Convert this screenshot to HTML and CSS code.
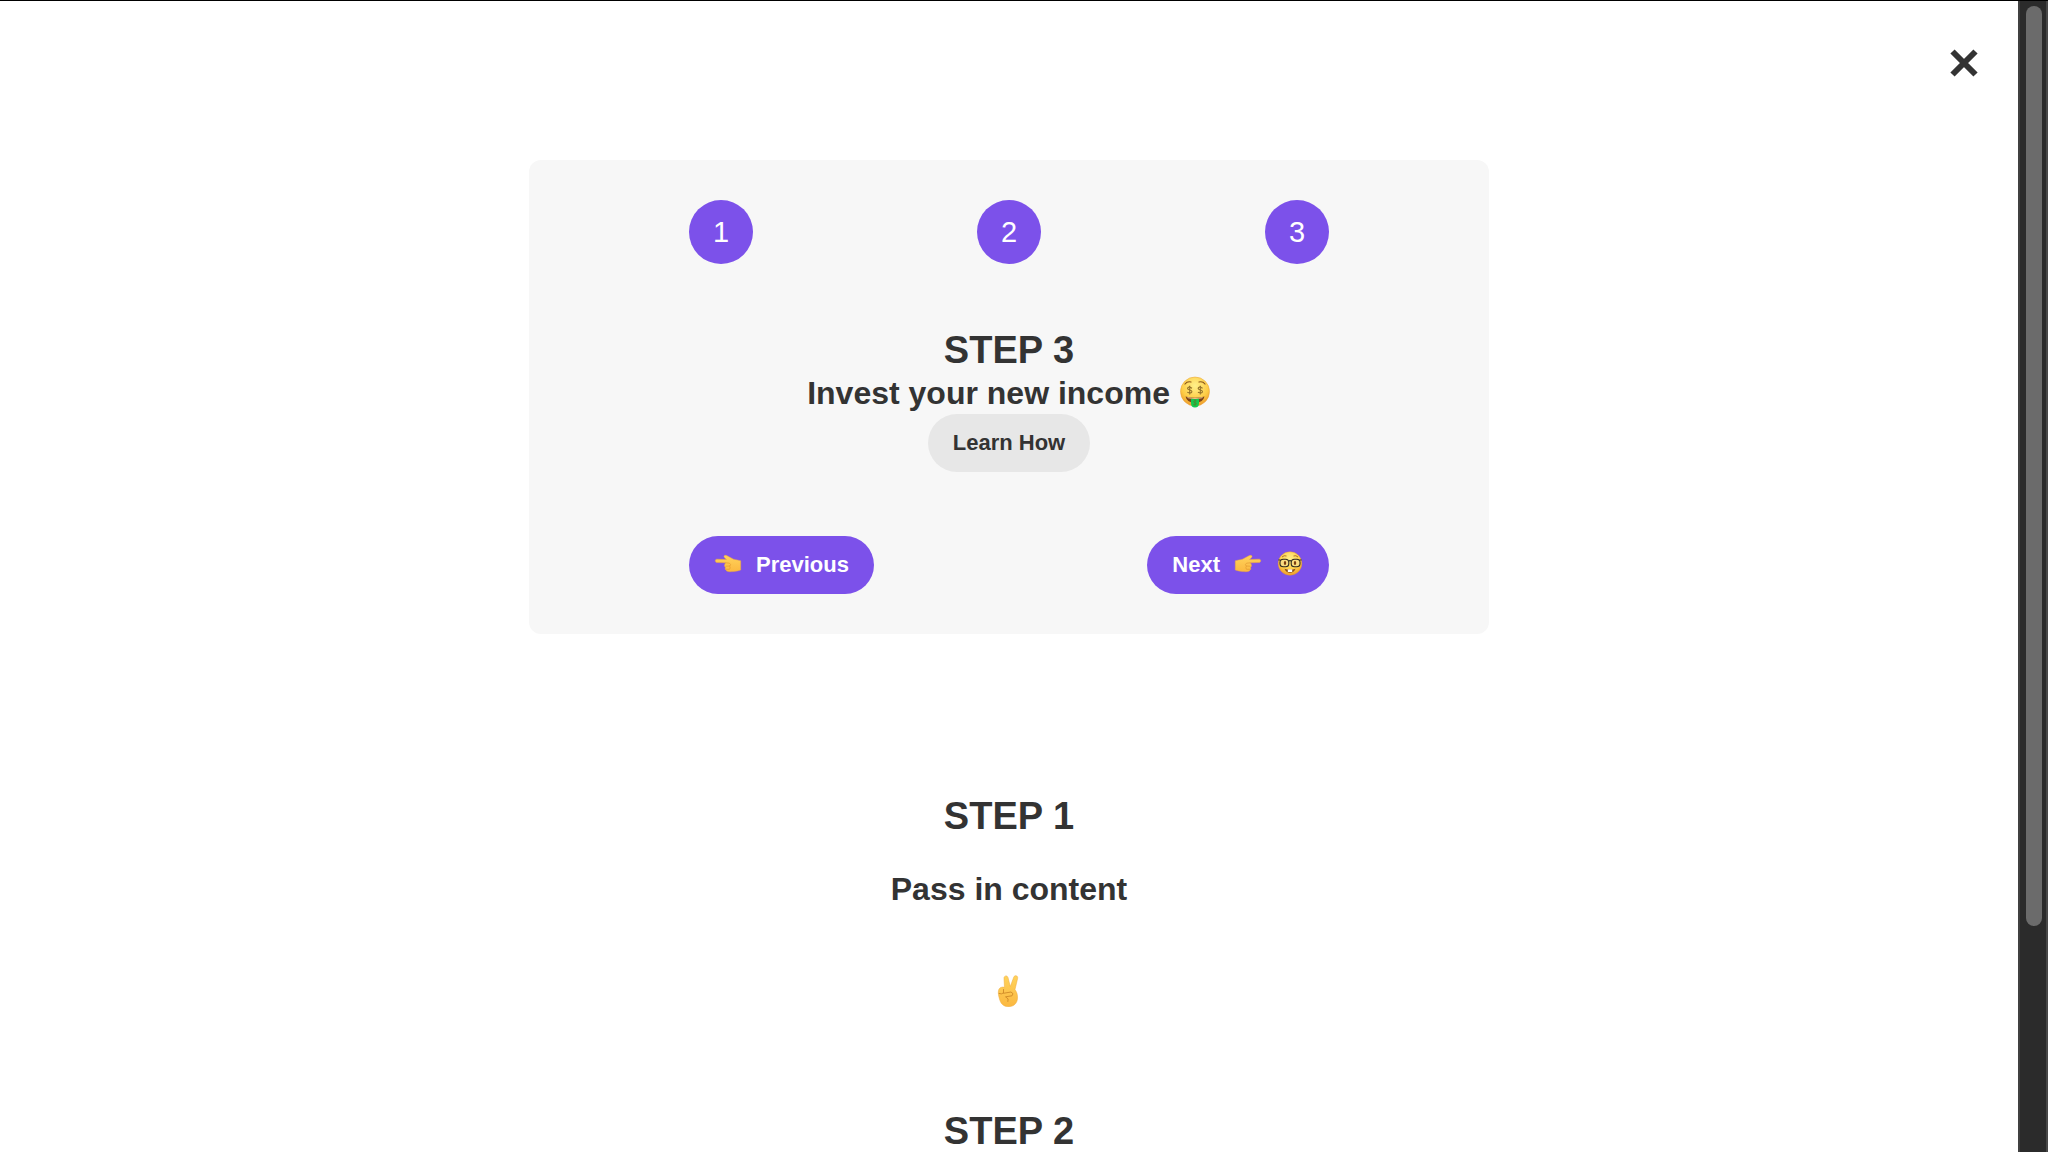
FILE: index.html
```html
<!DOCTYPE html>
<html lang="en">
<head>
<meta charset="utf-8">
<meta name="viewport" content="width=device-width, initial-scale=1">
<title>Steps</title>
<link rel="stylesheet" href="styles.css">
</head>
<body>
<svg class="defs" aria-hidden="true">
  <defs>
    <radialGradient id="face" cx="50%" cy="30%" r="72%">
      <stop offset="0" stop-color="#fff08a"/><stop offset=".65" stop-color="#fdcc45"/><stop offset="1" stop-color="#ec9528"/>
    </radialGradient>
    <linearGradient id="skin" x1="0" y1="0" x2="0" y2="1">
      <stop offset="0" stop-color="#ffd35c"/><stop offset="1" stop-color="#fbb840"/>
    </linearGradient>
    <symbol id="hand" viewBox="0 0 28 28">
      <path fill="url(#skin)" stroke="#efa93c" stroke-width=".5" d="M1.400 10.200C1 9 2 8 3.300 8.200L12.500 8.500C11.500 7.400 9.700 6.300 10 5.200C10.400 3.800 12.500 4.400 14 5.300L19.500 8.200C22 8.800 25 9.300 26.700 9.800V19C24.500 19.600 22 20.500 19.500 20.500C16.500 20.700 12.800 21.200 11.800 19C10.800 18 11.300 17 11.500 16.400C10 15.300 10.500 13.800 11 13L11.500 11.800L3 11.500C2.200 11.500 1.600 11 1.400 10.200Z"/>
      <path fill="none" stroke="#e39a30" stroke-width=".7" stroke-linecap="round" d="M11.600 11.800L15.500 12.200Q17.500 13.400 15.800 15L11.800 15.200M12 18.300H15.500Q16.800 17 15.800 15.300"/>
    </symbol>
  </defs>
</svg>
<div class="page">
  <main class="content">
    <button class="close" type="button" aria-label="Close">
      <svg viewBox="0 0 28 28" width="28" height="28" aria-hidden="true"><path d="M2.500 2.500L25.500 25.500M25.500 2.500L2.500 25.500" stroke="#333" stroke-width="6"/></svg>
    </button>

    <section class="card">
      <div class="numbers">
        <div class="number">1</div>
        <div class="number">2</div>
        <div class="number">3</div>
      </div>
      <div class="message">
        <h2 class="title">STEP 3</h2>
        <p class="text">Invest your new income
          <svg class="emoji" viewBox="0 0 32 32" role="img" aria-label="Money face">
            <circle cx="16" cy="15.500" r="14.500" fill="url(#face)" stroke="#e9a035" stroke-width=".5"/>
            <path d="M6 8Q8.300 5 12 6M20 6Q23.700 5 26 8" fill="none" stroke="#8a5418" stroke-width="1.200" stroke-linecap="round"/>
            <g fill="none" stroke="#94722a" stroke-width="1.100"><path d="M13 12.200Q9.200 10 8.600 12.200Q8.400 13.600 10.700 14Q13.200 14.600 12.800 16Q12 17.800 8.300 16.300M10.700 9.800V18.400"/><path d="M23.600 12.200Q19.800 10 19.200 12.200Q19 13.600 21.300 14Q23.800 14.600 23.400 16Q22.600 17.800 18.900 16.300M21.300 9.800V18.400"/></g>
            <path d="M6.500 20.500Q16 23 25.500 20.500Q24 27 16 27Q8 27 6.500 20.500Z" fill="#7b421a"/>
            <path d="M8 20.900Q16 23 24 20.900L23 22.300Q16 23.800 9 22.300Z" fill="#e9c58b"/>
            <path d="M12 22.700Q16 23.600 20 22.700V27Q20 31.500 16 31.500Q12 31.500 12 27Z" fill="#14c84e"/>
            <path d="M17.600 25Q14.800 24 14.600 25.600Q14.600 26.500 16 26.800Q17.700 27.200 17.300 28.200Q16.500 29.400 14.300 28.500M16 23.800V29.700" fill="none" stroke="#4d8a2c" stroke-width=".9"/>
          </svg>
        </p>
        <button class="button light" type="button">Learn How</button>
      </div>
      <div class="actions">
        <button class="button" type="button">
          <svg class="icon" role="img" aria-label="Pointing left"><use href="#hand"/></svg>
          <span>Previous</span>
        </button>
        <button class="button" type="button">
          <span>Next</span>
          <svg class="icon flipped" role="img" aria-label="Pointing right"><use href="#hand"/></svg>
          <svg class="icon" viewBox="0 0 28 28" role="img" aria-label="Nerd face">
            <circle cx="14" cy="12.500" r="11.800" fill="url(#face)" stroke="#e9952d" stroke-width=".4"/>
            <path d="M6 6Q8 4 10.500 5M17.500 5Q20 4 22 6" fill="none" stroke="#9b5a17" stroke-width=".8"/>
            <g fill="#f9dc80" stroke="#2c2a20" stroke-width="1.100"><rect x="4" y="8.300" width="8.800" height="7.400" rx="3.300"/><rect x="15.200" y="8.300" width="8.800" height="7.400" rx="3.300"/></g>
            <path d="M2.400 9H4.500M23.500 9H25.600M12.700 10Q14 9.200 15.300 10" fill="none" stroke="#2c2a20" stroke-width="1.200"/>
            <ellipse cx="9" cy="12" rx="1.200" ry="2" fill="#7a3d10"/><ellipse cx="19" cy="12" rx="1.200" ry="2" fill="#7a3d10"/>
            <path d="M8.500 17.800Q14 19.500 19.500 17.800Q18 21.800 14 21.800Q10 21.800 8.500 17.800Z" fill="#8b4b1b"/>
            <path d="M11.800 18.400H16.200V21H11.800Z" fill="#fff"/>
          </svg>
        </button>
      </div>
    </section>

    <section class="step">
      <h2 class="title">STEP 1</h2>
      <p class="text spaced">Pass in content</p>
      <p class="text">
        <svg class="emoji" viewBox="0 0 32 32" role="img" aria-label="Victory hand">
          <path fill="url(#skin)" stroke="#efaa3a" stroke-width=".5" d="M5.500 15.500C6 12.200 10 11.500 11.500 12.500L11 3.500C10.700 .800 14.200 -.200 15 2.500L17.300 11.500L20.800 2C21.800 -.300 25.300 .500 24.600 3.500L22 14.500C23.700 17 24.700 19.500 24.500 23C24.300 28.500 20.500 31.700 15.500 31.700C10.500 31.700 7.500 28.500 6.500 24C5.600 21 5 18 5.500 15.500Z"/>
          <path fill="none" stroke="#cf8a28" stroke-width=".9" stroke-linecap="round" d="M6 18.500Q8.500 19.700 10.500 18M10.500 18V14.500M11 18.200L18 17Q21.500 18.500 19 20.800L12.500 21.800Q16.500 23.500 15 26.500"/>
        </svg>
      </p>
    </section>

    <section class="step">
      <h2 class="title">STEP 2</h2>
    </section>
  </main>
  <div class="scrollbar" aria-hidden="true"><div class="thumb"></div></div>
</div>
</body>
</html>
```

FILE: styles.css
```css
* {
  box-sizing: border-box;
}

body {
  margin: 0;
  color: #333;
  background: #fff;
  font-family: "Liberation Sans", Arial, sans-serif;
}

h2,
p {
  margin: 0;
}

.defs {
  position: absolute;
  width: 0;
  height: 0;
}

.page {
  display: flex;
  height: 100vh;
  overflow: hidden;
  border-top: 1px solid #000;
}

.content {
  display: flex;
  flex: 1;
  flex-direction: column;
  align-items: center;
  overflow: hidden;
}

.close {
  display: flex;
  align-self: flex-end;
  flex-shrink: 0;
  margin: 40px 32px 0 0;
  padding: 8px;
  border: 0;
  background: none;
  cursor: pointer;
}

.card {
  flex-shrink: 0;
  width: 100%;
  max-width: 960px;
  margin: 75px 0 160px;
  padding: 40px 160px;
  border-radius: 12px;
  background: #f7f7f7;
}

.numbers,
.actions {
  display: flex;
  justify-content: space-between;
}

.number {
  display: flex;
  align-items: center;
  justify-content: center;
  width: 64px;
  height: 64px;
  border-radius: 50%;
  color: #fff;
  background: #7c51ea;
  font-size: 29px;
}

.message {
  display: flex;
  flex-direction: column;
  align-items: center;
  margin: 64px 0;
}

.title {
  font-size: 38px;
  line-height: 44px;
}

.text {
  font-size: 32px;
  font-weight: bold;
  line-height: 42px;
  white-space: nowrap;
}

.emoji {
  width: 32px;
  height: 32px;
  vertical-align: -4px;
}

.button {
  display: flex;
  align-items: center;
  gap: 14px;
  height: 58px;
  padding: 0 25px;
  border: 0;
  border-radius: 29px;
  color: #fff;
  background: #7c51ea;
  font: bold 22px "Liberation Sans", Arial, sans-serif;
  cursor: pointer;
}

.light {
  color: #333;
  background: #e7e7e7;
}

.icon {
  width: 28px;
  height: 28px;
}

.flipped {
  transform: scaleX(-1);
}

.step {
  flex-shrink: 0;
  margin-bottom: 96px;
  text-align: center;
}

.spaced {
  margin: 30px 0 61px;
}

.scrollbar {
  flex: 0 0 30px;
  padding: 5px 4px 0 6px;
  border-right: 2px solid #484848;
  border-left: 2px solid #404040;
  background: #2b2b2b;
}

.thumb {
  height: 80.3%;
  border-radius: 8px;
  background: #6b6b6b;
}
```
